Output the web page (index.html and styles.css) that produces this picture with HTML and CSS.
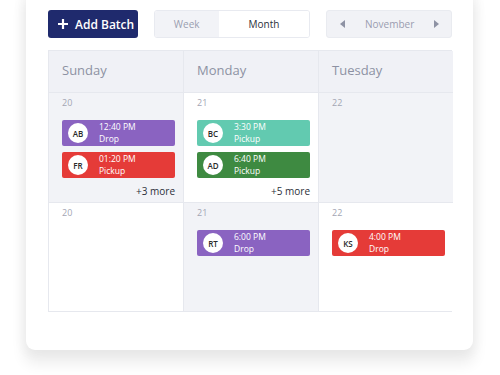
FILE: index.html
```html
<!DOCTYPE html>
<html>
<head>
<meta charset="utf-8">
<link rel="stylesheet" href="styles.css">
</head>
<body>
<div class="page">
  <div class="card">
    <div class="toolbar">
      <button class="add-btn">
        <svg class="plus" width="12" height="12" viewBox="0 0 12 12"><path d="M6 1v10M1 6h10" stroke="#fff" stroke-width="2.2" stroke-linecap="butt"/></svg>
        <span>Add Batch</span>
      </button>
      <div class="toggle">
        <span class="tog week">Week</span>
        <span class="tog month">Month</span>
      </div>
      <div class="monthnav">
        <svg width="6" height="8" viewBox="0 0 6 8"><path d="M5 0v8L0 4z" fill="#8e92a4"/></svg>
        <span>November</span>
        <svg width="6" height="8" viewBox="0 0 6 8"><path d="M1 0v8l5-4z" fill="#8e92a4"/></svg>
      </div>
    </div>
    <div class="grid">
      <div class="head">Sunday</div>
      <div class="head">Monday</div>
      <div class="head">Tuesday</div>

      <div class="cell gray">
        <div class="date">20</div>
        <div class="ev purple"><span class="av">AB</span><span class="txt"><span class="ln">12:40 PM</span><span class="ln">Drop</span></span></div>
        <div class="ev red"><span class="av">FR</span><span class="txt"><span class="ln">01:20 PM</span><span class="ln">Pickup</span></span></div>
        <div class="more">+3 more</div>
      </div>
      <div class="cell">
        <div class="date">21</div>
        <div class="ev teal"><span class="av">BC</span><span class="txt"><span class="ln">3:30 PM</span><span class="ln">Pickup</span></span></div>
        <div class="ev green"><span class="av">AD</span><span class="txt"><span class="ln">6:40 PM</span><span class="ln">Pickup</span></span></div>
        <div class="more">+5 more</div>
      </div>
      <div class="cell gray">
        <div class="date">22</div>
      </div>

      <div class="cell">
        <div class="date">20</div>
      </div>
      <div class="cell gray">
        <div class="date">21</div>
        <div class="ev purple"><span class="av">RT</span><span class="txt"><span class="ln">6:00 PM</span><span class="ln">Drop</span></span></div>
      </div>
      <div class="cell">
        <div class="date">22</div>
        <div class="ev red"><span class="av">KS</span><span class="txt"><span class="ln">4:00 PM</span><span class="ln">Drop</span></span></div>
      </div>
    </div>
  </div>
</div>
</body>
</html>
```

FILE: styles.css
```css
* { box-sizing: border-box; }
html, body { margin: 0; padding: 0; background: #fff; }
body { font-family: "Open Sans", "Noto Sans", sans-serif; width: 500px; height: 375px; overflow: hidden; }
.page { padding-left: 26px; }
.card {
  width: 447px;
  margin-top: -12px;
  background: #fff;
  border-radius: 9px;
  padding: 22px 21px 38px 22px;
  box-shadow: 0 12px 14px 2px rgba(0,0,0,0.07), 0 0 12px 4px rgba(0,0,0,0.035);
}
.toolbar { display: flex; align-items: center; height: 28px; margin-bottom: 12px; }
.add-btn {
  display: flex; align-items: center; gap: 6px;
  width: 90px; height: 28px; padding: 0 0 0 9px;
  background: #1f2a6d; color: #fff; border: none; border-radius: 3px;
  font-family: inherit; font-size: 12px; font-weight: 600;
}
.toggle {
  display: flex; margin-left: 16px; height: 28px;
  border: 1px solid #e8eaf0; border-radius: 3px; overflow: hidden;
}
.tog { display: flex; align-items: center; justify-content: center; font-size: 10px; }
.week { width: 64px; background: #f2f3f7; color: #9a9eb0; }
.month { width: 91px; background: #fff; color: #2c2f3a; }
.monthnav {
  display: flex; align-items: center; justify-content: space-between;
  margin-left: 16px; width: 126px; height: 28px; padding: 0 12px 0 13px;
  background: #f1f2f6; border: 1px solid #e9ebf0; border-radius: 3px;
  font-size: 10px; color: #9a9db0;
}
.grid {
  display: grid; grid-template-columns: 135px 135px 134px;
  grid-template-rows: 42px 110px 108px;
  border: 1px solid #e6e8ee; width: 404px;
}
.head {
  background: #f0f1f6; color: #8d91a3; font-size: 13px;
  display: flex; align-items: center; padding: 0 0 3px 13px;
  border-right: 1px solid #e6e8ee; border-bottom: 1px solid #e6e8ee;
}
.cell {
  background: #fff; padding: 4px 8px 0 13px;
  border-right: 1px solid #e6e8ee; border-bottom: 1px solid #e6e8ee;
}
.head:nth-child(3), .cell:nth-child(3n) { border-right: none; }
.cell:nth-child(n+7) { border-bottom: none; }
.cell.gray { background: #f2f3f7; }
.date { font-size: 9px; color: #a3a6b4; height: 11px; line-height: 11px; margin-bottom: 12px; }
.ev {
  display: flex; align-items: center; height: 26px; border-radius: 2px;
  padding-left: 6px; margin-bottom: 6px; color: #fff;
}
.av {
  width: 20px; height: 20px; border-radius: 50%; background: #fff; color: #2a2a2a;
  display: flex; align-items: center; justify-content: center;
  font-size: 8px; font-weight: 600; flex: none;
}
.txt { margin-left: 11px; display: flex; flex-direction: column; font-size: 8.5px; font-weight: 500; }
.ln { display: block; line-height: 11.6px; height: 11.6px; }
.purple { background: #8a63c1; }
.red { background: #e53b38; }
.teal { background: #62cab0; }
.green { background: #3e8a41; }
.more { text-align: right; font-size: 10px; color: #2c2f3a; margin-top: 4px; }
```
